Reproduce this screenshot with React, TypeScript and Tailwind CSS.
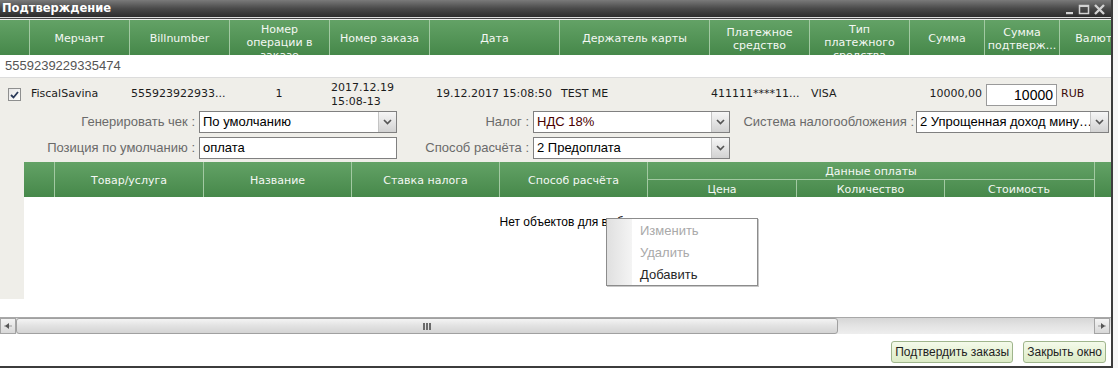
import React from "react";

const DV = "font-['DejaVu_Sans',sans-serif]";
const LS = "font-['Liberation_Sans',Arial,sans-serif]";

function Chevron() {
  return (
    <svg width="9" height="6" viewBox="0 0 9 6">
      <path d="M1 1 L4.5 4.5 L8 1" fill="none" stroke="#555" strokeWidth="1.7" />
    </svg>
  );
}

function Select({ w, text, tc }: { w: string; text: string; tc?: string }) {
  return (
    <div className={`${w} h-[22px] flex border border-[#808080] bg-white shrink-0`}>
      <div
        className={`flex-1 min-w-0 pl-[3px] leading-[20px] text-[13px] whitespace-nowrap overflow-hidden ${LS} ${tc ?? "text-black"}`}
      >
        {text}
      </div>
      <div className="w-[18px] h-full border-l border-[#c4c4c4] bg-gradient-to-b from-[#f6f6f6] to-[#d2d2d2] flex items-center justify-center">
        <Chevron />
      </div>
    </div>
  );
}

function Label({ w, children, pr }: { w: string; children: React.ReactNode; pr: string }) {
  return (
    <div
      className={`${w} ${pr} shrink-0 text-right whitespace-nowrap text-[13px] leading-[22px] text-[#6a6a6a] ${LS}`}
    >
      {children}
    </div>
  );
}

const hc =
  "shrink-0 flex justify-center text-center border-l border-[#a2c9a2] overflow-hidden leading-[13px] px-[5px]";

export default function App() {
  return (
    <div className="relative w-[1118px] h-[368px] overflow-hidden bg-[#f6f6f6]">
      <div className="w-[1113px] h-[368px] flex flex-col bg-white border-r-2 border-b-2 border-[#3c3c3c] overflow-hidden">
        {/* title bar */}
        <div className="h-[17px] shrink-0 flex items-center justify-between bg-gradient-to-b from-[#7a7a7a] via-[#4a4a4a] to-[#2c2c2c]">
          <div className={`pl-[2px] text-[11.5px] font-bold text-white leading-[17px] ${DV}`}>Подтверждение</div>
          <svg width="44" height="14" viewBox="0 0 44 14" className="mr-[2px]">
            <rect x="1" y="10" width="7" height="2.2" fill="#d2d2d2" />
            <rect x="14.5" y="3.5" width="9" height="8" fill="none" stroke="#d2d2d2" strokeWidth="1.5" />
            <rect x="14" y="3" width="10" height="2" fill="#d2d2d2" />
            <path d="M30 3 L39 12 M39 3 L30 12" stroke="#d2d2d2" strokeWidth="2.4" />
          </svg>
        </div>
        <div className="h-px shrink-0 bg-[#dcdcdc]" />
        <div className="h-px shrink-0 bg-[#454545]" />
        <div className="h-px shrink-0 bg-[#f0f0f0]" />

        {/* grid header */}
        <div
          className={`h-[35px] shrink-0 flex bg-gradient-to-b from-[#63a266] to-[#46884a] text-[11px] text-[#f4f8f4] ${DV}`}
        >
          <div className="w-[29px] shrink-0" />
          <div className={`${hc} w-[100px] items-center pt-[2px]`}>Мерчант</div>
          <div className={`${hc} w-[100px] items-center pt-[2px]`}>Billnumber</div>
          <div className={`${hc} w-[100px] items-start pt-[3px]`}>Номер операции в заказе</div>
          <div className={`${hc} w-[100px] items-center pt-[2px]`}>Номер заказа</div>
          <div className={`${hc} w-[130px] items-center pt-[2px]`}>Дата</div>
          <div className={`${hc} w-[150px] items-center pt-[2px]`}>Держатель карты</div>
          <div className={`${hc} w-[100px] items-center pt-[2px]`}>Платежное средство</div>
          <div className={`${hc} w-[100px] items-start pt-[3px]`}>Тип платежного средства</div>
          <div className={`${hc} w-[75px] items-center pt-[2px]`}>Сумма</div>
          <div className={`${hc} w-[75px] items-center pt-[2px] !px-[2px] whitespace-nowrap`}>
            <div>
              Сумма
              <br />
              подтверж...
            </div>
          </div>
          <div className={`${hc} w-[75px] items-center pt-[2px]`}>Валюта</div>
        </div>

        {/* order row */}
        <div className={`h-[22px] shrink-0 flex items-center pl-[5px] text-[13px] text-[#555] ${LS}`}>
          5559239229335474
        </div>
        <div className="h-px shrink-0 bg-[#dcdcdc]" />

        {/* detail */}
        <div className="h-[221px] shrink-0 bg-[#efeee9] flex flex-col">
          <div className={`h-[33px] shrink-0 flex items-center text-[11px] text-[#1c1c1c] whitespace-nowrap ${DV}`}>
            <div className="w-[29px] shrink-0 pl-[8px] flex items-center">
              <div className="w-[13px] h-[13px] border border-[#8e8f8f] bg-gradient-to-br from-[#e6e6e6] to-white flex items-center justify-center">
                <svg width="9" height="8" viewBox="0 0 9 8">
                  <path d="M1 4 L3.5 6.5 L8 1" fill="none" stroke="#2a3a5a" strokeWidth="1.8" />
                </svg>
              </div>
            </div>
            <div className="w-[100px] shrink-0 pl-[2px] overflow-hidden">FiscalSavina</div>
            <div className="w-[100px] shrink-0 pl-[2px] overflow-hidden">555923922933...</div>
            <div className="w-[100px] shrink-0 text-center">1</div>
            <div className="w-[100px] shrink-0 pl-[2px] leading-[14px]">
              2017.12.19
              <br />
              15:08-13
            </div>
            <div className="w-[130px] shrink-0 text-center overflow-visible flex justify-center">
              <span>19.12.2017 15:08:50</span>
            </div>
            <div className="w-[150px] shrink-0 pl-[2px]">TEST ME</div>
            <div className="w-[100px] shrink-0 pl-[2px] overflow-hidden">411111****11...</div>
            <div className="w-[100px] shrink-0 pl-[2px]">VISA</div>
            <div className="w-[75px] shrink-0 pr-[2px] text-right">10000,00</div>
            <div className="w-[75px] shrink-0 px-[2px]">
              <div
                className={`w-[71px] h-[22px] border border-[#9a9a9a] bg-white text-right pr-[3px] text-[14px] leading-[20px] text-black ${LS}`}
              >
                10000
              </div>
            </div>
            <div className="w-[75px] shrink-0 pl-[2px] text-[#3a0a0a]">RUB</div>
          </div>

          <div className="h-[22px] shrink-0 flex">
            <Label w="w-[199px]" pr="pr-[4px]">Генерировать чек :</Label>
            <Select w="w-[198px]" text="По умолчанию" />
            <Label w="w-[136px]" pr="pr-[4px]">Налог :</Label>
            <Select w="w-[197px]" text="НДС 18%" tc="text-[#4a0000]" />
            <Label w="w-[186px]" pr="pr-[2px]">Система налогообложения :</Label>
            <Select w="w-[193px]" text="2 Упрощенная доход мину…" />
          </div>
          <div className="h-[4px] shrink-0" />
          <div className="h-[22px] shrink-0 flex">
            <Label w="w-[199px]" pr="pr-[4px]">Позиция по умолчанию :</Label>
            <div
              className={`w-[198px] h-[22px] shrink-0 border border-[#808080] bg-white pl-[3px] text-[13px] leading-[20px] text-black ${LS}`}
            >
              оплата
            </div>
            <Label w="w-[136px]" pr="pr-[4px]">Способ расчёта :</Label>
            <Select w="w-[197px]" text="2 Предоплата" />
          </div>
          <div className="h-[3px] shrink-0" />

          {/* inner table */}
          <div className="h-[137px] shrink-0 flex">
            <div className="w-[24px] shrink-0" />
            <div className="flex-1 flex flex-col bg-white">
              <div
                className={`h-[35px] shrink-0 flex bg-gradient-to-b from-[#63a266] to-[#46884a] text-[11px] text-[#f4f8f4] ${DV}`}
              >
                <div className="w-[30px] shrink-0" />
                <div className={`${hc} w-[149px] items-center pt-[2px]`}>Товар/услуга</div>
                <div className={`${hc} w-[148px] items-center pt-[2px]`}>Название</div>
                <div className={`${hc} w-[148px] items-center pt-[2px]`}>Ставка налога</div>
                <div className={`${hc} w-[148px] items-center pt-[2px]`}>Способ расчёта</div>
                <div className="w-[447px] shrink-0 flex flex-col border-l border-[#a2c9a2]">
                  <div className="h-[18px] shrink-0 flex items-center justify-center pt-[1px] border-b border-[#a2c9a2] leading-[13px]">
                    Данные оплаты
                  </div>
                  <div className="flex-1 flex">
                    <div className="w-[148px] shrink-0 flex items-center justify-center pt-[1px] leading-[13px]">
                      Цена
                    </div>
                    <div className="w-[148px] shrink-0 flex items-center justify-center pt-[1px] leading-[13px] border-l border-[#a2c9a2]">
                      Количество
                    </div>
                    <div className="w-[149px] shrink-0 flex items-center justify-center pt-[1px] leading-[13px] border-l border-[#a2c9a2]">
                      Стоимость
                    </div>
                  </div>
                </div>
                <div className="flex-1 border-l border-[#a2c9a2]" />
              </div>
              <div className="flex-1 flex justify-center pt-[18px] pl-[8px]">
                <span className={`text-[12px] leading-[14px] text-black ${LS}`}>Нет объектов для выбора</span>
              </div>
            </div>
          </div>
        </div>

        <div className="h-[18px] shrink-0 bg-white" />

        {/* horizontal scrollbar */}
        <div className="h-[17px] shrink-0 flex bg-gradient-to-b from-[#d6d6d6] via-[#e4e4e4] to-[#eeeeee] border-t border-[#a8a8a8]">
          <div className="w-[16px] shrink-0 border border-[#a4a4a4] bg-gradient-to-b from-[#f4f4f4] to-[#d8d8d8] flex items-center justify-center">
            <svg width="10" height="8" viewBox="0 0 10 8">
              <path d="M1 4 H9" stroke="#999" strokeWidth="1" />
              <path d="M2 4 L6 1 V7 Z" fill="#555" />
            </svg>
          </div>
          <div className="w-[822px] shrink-0 rounded-[3px] border border-[#a0a0a0] bg-gradient-to-b from-[#f4f4f4] via-[#e2e2e2] to-[#d4d4d4] flex items-center justify-center">
            <svg width="8" height="7" viewBox="0 0 8 7">
              <rect x="0" y="0" width="2" height="7" fill="#6a6a6a" />
              <rect x="3" y="0" width="2" height="7" fill="#6a6a6a" />
              <rect x="6" y="0" width="2" height="7" fill="#6a6a6a" />
            </svg>
          </div>
          <div className="flex-1" />
          <div className="w-[16px] shrink-0 mr-[1px] border border-[#a4a4a4] bg-gradient-to-b from-[#f4f4f4] to-[#d8d8d8] flex items-center justify-center">
            <svg width="10" height="8" viewBox="0 0 10 8">
              <path d="M1 4 H9" stroke="#999" strokeWidth="1" />
              <path d="M8 4 L4 1 V7 Z" fill="#555" />
            </svg>
          </div>
        </div>

        {/* toolbar */}
        <div className="flex-1 bg-white flex justify-end items-start pt-[7px] pr-[5px] gap-[10px]">
          <div
            className={`h-[22px] px-[3px] rounded-[3px] border border-[#9fb58c] bg-gradient-to-b from-[#f4faea] to-[#dcebc6] text-[12px] leading-[20px] text-[#1e1e1e] ${LS}`}
          >
            Подтвердить заказы
          </div>
          <div
            className={`h-[22px] px-[3px] rounded-[3px] border border-[#9fb58c] bg-gradient-to-b from-[#f4faea] to-[#dcebc6] text-[12px] leading-[20px] text-[#1e1e1e] ${LS}`}
          >
            Закрыть окно
          </div>
        </div>
      </div>

      {/* context menu */}
      <div className="absolute left-[606px] top-[218px] w-[152px] h-[68px] border border-[#8c8c8c] bg-white flex shadow-[1px_1px_0_#c8c8c8]">
        <div className="w-[25px] shrink-0 bg-gradient-to-r from-[#e0e0e0] to-[#f4f4f4]" />
        <div className={`flex-1 flex flex-col pt-px pl-[8px] text-[13px] ${LS}`}>
          <div className="h-[22px] leading-[22px] text-[#a9a9a9]">Изменить</div>
          <div className="h-[22px] leading-[22px] text-[#a9a9a9]">Удалить</div>
          <div className="h-[22px] leading-[22px] text-[#262626]">Добавить</div>
        </div>
      </div>
    </div>
  );
}
